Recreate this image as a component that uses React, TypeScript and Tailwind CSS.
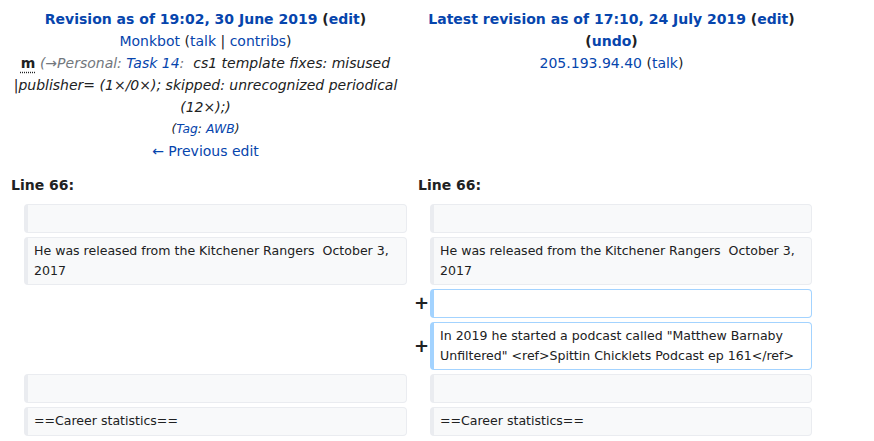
import React from "react";

const link = "text-[#0645ad]";

const Context = ({ text }: { text?: string }) => (
  <div className="rounded-[4px] border border-l-4 border-[#eaecf0] bg-[#f8f9fa] px-[6px] py-[3.5px] text-[12.55px] leading-[19.7px] whitespace-pre-wrap">
    {text ?? "\u00a0"}
  </div>
);

const Added = ({ text }: { text?: string }) => (
  <div className="rounded-[4px] border border-l-4 border-[#a3d3ff] bg-white px-[6px] py-[3.5px] text-[12.55px] leading-[19.7px] whitespace-pre-wrap">
    {text ?? "\u00a0"}
  </div>
);

const Marker = ({ sign }: { sign?: string }) => (
  <div className="flex items-center justify-end text-[18px] font-bold leading-none">
    <span className="-mr-[3px]">{sign}</span>
  </div>
);

export default function App() {
  return (
    <div
      className="min-h-[441px] bg-white text-[#202122] text-[14px]"
      style={{ fontFamily: '"DejaVu Sans", sans-serif' }}
    >
      <div className="grid grid-cols-[16px_383px_15px_382px] gap-x-[4px] gap-y-[4px] pl-[4px] pt-[4px]">
        {/* titles */}
        <div className="col-span-2 px-[7px] py-[4px] text-center leading-[22px]">
          <div className="font-bold">
            <span className={link}>Revision as of 19:02, 30 June 2019</span> (
            <span className={link}>edit</span>)
          </div>
          <div>
            <span className={link}>Monkbot</span> (<span className={link}>talk</span> |{" "}
            <span className={link}>contribs</span>)
          </div>
          <div className="italic">
            <span className="not-italic font-bold underline decoration-dotted underline-offset-[4px]">
              m
            </span>{" "}
            <span className="text-[#72777d]">(→Personal: </span>
            <span className={link}>Task 14</span>
            <span className="text-[#72777d]">:</span>
            {"\u00a0 "}cs1 template fixes: misused |publisher= (1×/0×); skipped: unrecognized periodical (12×);)
          </div>
          <div className="text-[12.32px] italic">
            (<span className={link}>Tag</span>: <span className={link}>AWB</span>)
          </div>
          <div className={link}>← Previous edit</div>
        </div>
        <div className="col-span-2 px-[7px] py-[4px] text-center leading-[22px]">
          <div className="font-bold">
            <span className={link}>Latest revision as of 17:10, 24 July 2019</span> (
            <span className={link}>edit</span>)
          </div>
          <div className="font-bold">
            (<span className={link}>undo</span>)
          </div>
          <div>
            <span className={link}>205.193.94.40</span> (<span className={link}>talk</span>)
          </div>
        </div>

        {/* line numbers */}
        <div className="col-span-2 px-[7px] py-[4px] font-bold leading-[22px]">Line 66:</div>
        <div className="col-span-2 px-[7px] py-[4px] font-bold leading-[22px]">Line 66:</div>

        <Marker />
        <Context />
        <Marker />
        <Context />

        <Marker />
        <Context text="He was released from the Kitchener Rangers  October 3, 2017" />
        <Marker />
        <Context text="He was released from the Kitchener Rangers  October 3, 2017" />

        <div className="col-span-2" />
        <Marker sign="+" />
        <Added />

        <div className="col-span-2" />
        <Marker sign="+" />
        <Added text={'In 2019 he started a podcast called "Matthew Barnaby Unfiltered" <ref>Spittin Chicklets Podcast ep 161</ref>'} />

        <Marker />
        <Context />
        <Marker />
        <Context />

        <Marker />
        <Context text="==Career statistics==" />
        <Marker />
        <Context text="==Career statistics==" />
      </div>
    </div>
  );
}
